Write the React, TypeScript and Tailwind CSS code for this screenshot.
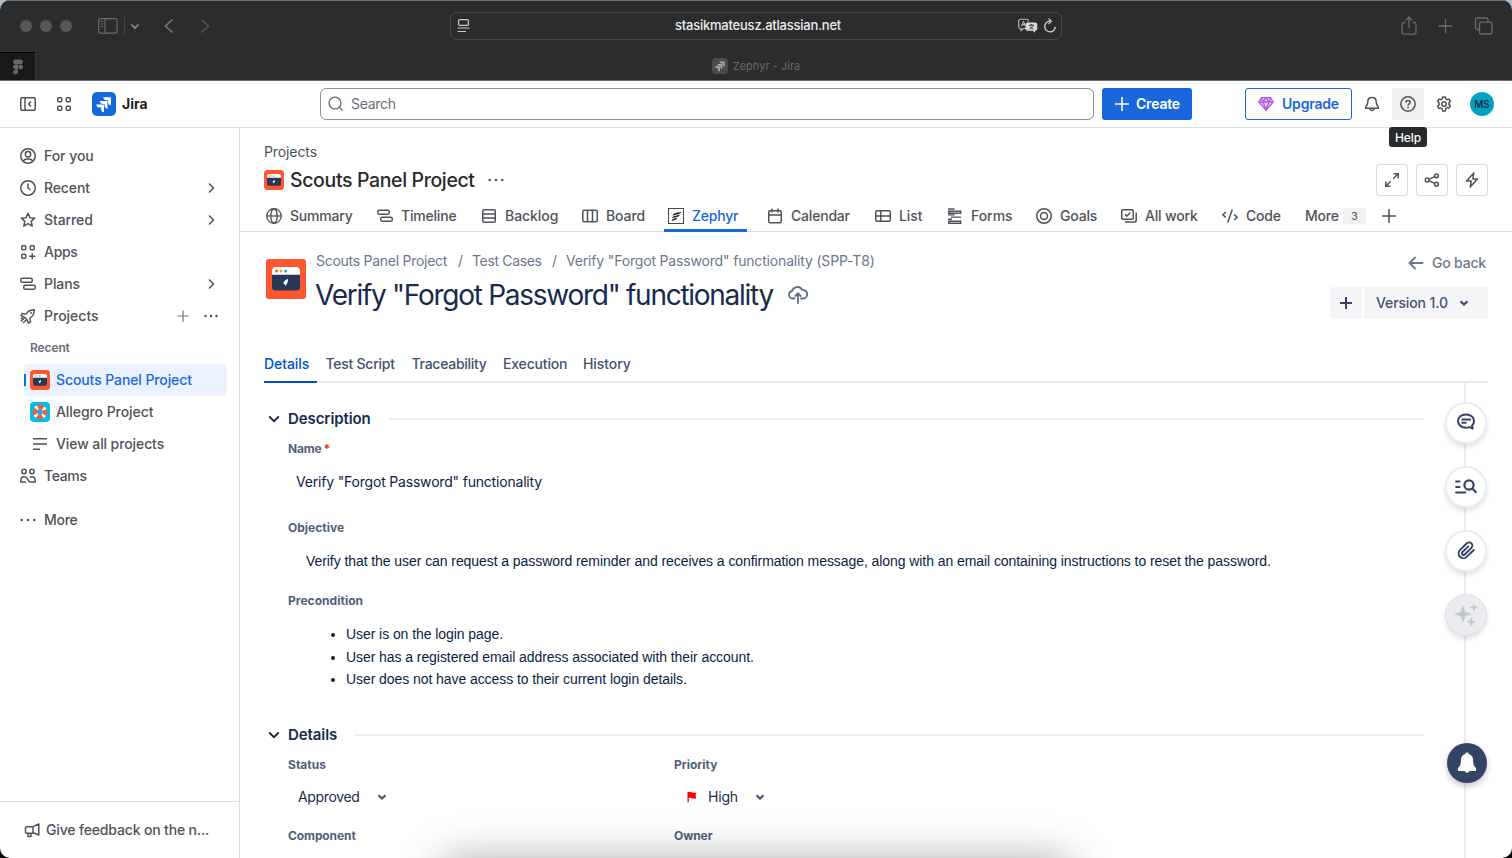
import React from 'react';
import type { ReactNode } from 'react';

const F = "font-['Inter','Liberation_Sans',sans-serif]";

function Icon({ size = 16, sw = 1.5, box = 16, className = '', children }: { size?: number; sw?: number; box?: number; className?: string; children: ReactNode }) {
  return (
    <svg width={size} height={size} viewBox={`0 0 ${box} ${box}`} fill="none" stroke="currentColor" strokeWidth={sw} className={`shrink-0 ${className}`}>
      {children}
    </svg>
  );
}

const Chevron = ({ d = 'right', sw = 1.5, size = 16 }: { d?: 'right' | 'down' | 'left'; sw?: number; size?: number }) => (
  <Icon sw={sw} size={size}>
    <path d={d === 'right' ? 'M6 3.5 10.5 8 6 12.5' : d === 'down' ? 'M4.5 6.5 8 10l3.5-3.5' : 'M10 3.5 5.5 8 10 12.5'} />
  </Icon>
);
const Dots = ({ size = 16 }: { size?: number }) => (
  <Icon size={size}>
    <g fill="currentColor" stroke="none"><circle cx="1.7" cy="8" r="1.35" /><circle cx="8" cy="8" r="1.35" /><circle cx="14.3" cy="8" r="1.35" /></g>
  </Icon>
);
const Timeline = () => <Icon><rect x="0.75" y="2.25" width="11.5" height="4" rx="1.6" /><rect x="3.75" y="9.25" width="11.5" height="4" rx="1.6" /></Icon>;
const Grid = () => (
  <Icon><rect x="1.75" y="1.75" width="4" height="4" rx="1" /><rect x="10.25" y="1.75" width="4" height="4" rx="1" /><rect x="1.75" y="10.25" width="4" height="4" rx="1" /><rect x="10.25" y="10.25" width="4" height="4" rx="1" /></Icon>
);
const JiraMark = () => (
  <path stroke="none" fill="currentColor" d="M9.051 15.434H7.734c-1.988 0-3.413-1.218-3.413-3h7.085c.367 0 .605.26.605.63v7.13c-1.772 0-2.96-1.435-2.96-3.434zm3.5-3.543h-1.318c-1.987 0-3.413-1.196-3.413-2.978h7.085c.367 0 .627.239.627.608v7.13c-1.772 0-2.981-1.435-2.981-3.434zm3.52-3.522h-1.317c-1.987 0-3.413-1.217-3.413-3h7.085c.367 0 .605.262.605.61v7.129c-1.771 0-2.96-1.435-2.96-3.434z" />
);

function Scouts({ size, r = 3 }: { size: number; r?: number }) {
  return (
    <svg width={size} height={size} viewBox="0 0 40 40" className="shrink-0">
      <rect width="40" height="40" rx={r} fill="#ff5630" />
      <rect x="6" y="8" width="28" height="23.5" rx="3.5" fill="#253858" />
      <path d="M6 15.7v-4.2A3.5 3.5 0 0 1 9.5 8h21a3.5 3.5 0 0 1 3.5 3.5v4.2z" fill="#fff" />
      <circle cx="10.6" cy="12" r="1.5" fill="#ff5630" /><circle cx="15" cy="12" r="1.5" fill="#ffab00" /><circle cx="19.5" cy="12" r="1.5" fill="#00b8d9" />
      <path d="M22 20c-2 .4-3.200 1.600-4 3l-1.500.9 1.400.7 1 1 .2 1.500 1.400-1.500c.9-1.500 1.600-3.300 1.500-5.600z" fill="#fff" />
    </svg>
  );
}

function Allegro() {
  return (
    <svg width="20" height="20" viewBox="0 0 20 20" fill="none" className="shrink-0">
      <rect width="20" height="20" rx="4" fill="#00c2e0" />
      <circle cx="10" cy="10" r="5" stroke="#ff5648" strokeWidth="4.3" />
      <circle cx="10" cy="10" r="5" stroke="#fff" strokeWidth="4.3" strokeDasharray="2.1 5.754" strokeDashoffset="-2.877" />
    </svg>
  );
}

function NavRow({ icon, label, track, right }: { icon: ReactNode; label: string; track: string; right?: ReactNode }) {
  return (
    <div className="flex h-8 items-center pl-5 pr-5 text-[#505258]">
      {icon}
      <span className={`ml-2 grow text-sm font-medium ${track}`}>{label}</span>
      {right}
    </div>
  );
}

const Arrow = () => <Chevron />;

function Chrome() {
  return (
    <div className="h-[81px] shrink-0 border-b border-[#6d6e70] border-t border-t-[#6e7274] bg-[#2b2c2e] text-[#6a6b6d]">
      <div className="flex h-[51px] items-center pb-px pl-5 pr-[18px]">
        <div className="flex gap-2">
          <i className="size-3 rounded-full bg-[#57585a]" /><i className="size-3 rounded-full bg-[#57585a]" /><i className="size-3 rounded-full bg-[#57585a]" />
        </div>
        <Icon size={20} box={20} sw={1.2} className="ml-[26px]"><rect x="0.6" y="2.6" width="18.5" height="14.5" rx="2" /><path d="M7 2.6v14.5M2.5 5.5h2.5M2.5 8h2.5M2.5 10.5h2.500" /></Icon>
        <div className="ml-[6px] h-[18px] w-px bg-[#434446]" />
        <div className="ml-[2px] flex text-[#8d8e90]"><Chevron d="down" sw={1.7} /></div>
        <Icon size={20} box={20} sw={1.5} className="ml-[16px] text-[#7b7c7e]"><path d="M13.5 3.5 6.5 10l7 6.500" /></Icon>
        <Icon size={20} box={20} sw={1.5} className="ml-4 text-[#56575a]"><path d="M6.5 3.500l7 6.500-7 6.500" /></Icon>
        <div className="ml-[235px] flex h-7 w-[612px] shrink-0 items-center rounded-[7px] border border-[#48494b] pl-[6px] pr-[3px] text-[#d4d4d5]">
          <Icon sw={1.2} className="text-[#c9cacb]"><rect x="1.6" y="1.6" width="9.8" height="5.8" rx="1" /><path d="M0.500 10h12M0.500 13.500h8.500" /></Icon>
          <span className="grow pl-[25px] text-center text-[13px] font-medium tracking-[-0.22px] text-[#ececed]">stasikmateusz.atlassian.net</span>
          <svg width="20" height="16" viewBox="0 0 20 16" fill="none" className="shrink-0">
            <path d="M8 10.500H5.500L3 12.500V10.500H2.500A1.800 1.800 0 0 1 .7 8.700V3A1.800 1.800 0 0 1 2.500 1.200h6A1.800 1.800 0 0 1 10.300 3v1" stroke="#b9babb" strokeWidth="1.100" />
            <path d="M3.500 8.300 5.500 3.300l2 5M4.200 6.700h2.600" stroke="#d4d4d5" strokeWidth="1" />
            <path d="M9.500 4.500h7.800a2 2 0 0 1 2 2v4.200a2 2 0 0 1-2 2h-.3v2l-2.300-2H9.500a2 2 0 0 1-2-2V6.500a2 2 0 0 1 2-2z" fill="#d9d9da" />
            <path d="M11 7.200h5M13.500 6v1.200M15.200 7.200c-.4 1.800-1.800 3.200-3.800 3.900M11.800 7.200c.5 1.800 1.700 3.100 3.600 3.900" stroke="#2b2c2e" strokeWidth=".9" />
          </svg>
          <Icon sw={1.3} className="ml-1"><path d="M8 3.200a5.300 5.300 0 1 0 5.300 5.600M6.500.6l2.800 2.700-2.800 2.800" /></Icon>
        </div>
        <Icon size={20} box={20} sw={1.3} className="ml-[337px]"><path d="M6.500 6.500H4.800A1.800 1.800 0 0 0 3 8.300v8a1.800 1.800 0 0 0 1.800 1.800h10.400a1.800 1.800 0 0 0 1.800-1.800v-8a1.800 1.800 0 0 0-1.800-1.800h-1.700M10 12V1.500M6.700 4.500 10 1.200l3.300 3.300" /></Icon>
        <Icon size={20} box={20} sw={1.3} className="ml-4"><path d="M10.500 3v14M3.500 10h14" /></Icon>
        <Icon size={20} box={20} sw={1.3} className="ml-[18px]"><rect x="6.500" y="6.200" width="12.500" height="11.800" rx="2" /><path d="M6.300 13.500H4.500A2 2 0 0 1 2.500 11.500V4a2 2 0 0 1 2-2H13a2 2 0 0 1 2 2v2" /></Icon>
      </div>
      <div className="flex h-7">
        <div className="flex w-9 items-center justify-center border-r border-t border-r-[#3a3b3d] border-t-black bg-[#191919] text-[#656667]">
          <svg width="12" height="16" viewBox="0 0 12 16" fill="currentColor"><path d="M3.500.5H6v4.800H3.500a2.400 2.400 0 0 1 0-4.800zM6 .5h2.500a2.400 2.400 0 0 1 0 4.800H6zM3.500 5.600H6v4.800H3.500a2.400 2.400 0 0 1 0-4.800zM3.500 10.700H6v2.400a2.450 2.450 0 1 1-2.500-2.400z" /><circle cx="8.600" cy="8" r="2.400" /></svg>
        </div>
        <div className="flex grow items-center justify-center pr-9">
          <div className="flex size-4 items-center justify-center rounded-[4px] bg-[#4b4c4e] text-[#a5a5a6]"><svg width="16" height="16" viewBox="0 0 24 24"><JiraMark /></svg></div>
          <span className="ml-[5px] pt-px text-[11px] tracking-[0.02px] text-[#68696b]">Zephyr - Jira</span>
        </div>
      </div>
    </div>
  );
}

function TopBar() {
  return (
    <div className="flex h-[47px] shrink-0 items-center border-b border-[#dddee1] pl-5 pr-[18px] text-[#505258]">
      <Icon><rect x="0.75" y="1.75" width="14.5" height="12.5" rx="1.2" /><path d="M5 2v12M11 5.500 8.700 8l2.300 2.500" /></Icon>
      <div className="ml-5 flex"><Grid /></div>
      <div className="ml-5 flex size-6 items-center justify-center rounded-[5px] bg-[#1868db] text-white"><svg width="24" height="24" viewBox="0 0 24 24"><JiraMark /></svg></div>
      <span className="ml-[6px] w-[198px] text-sm font-bold text-[#1e1f21]">Jira</span>
      <div className="flex h-8 w-[774px] items-center rounded-[6px] border border-[#8c8f97] pl-[7px] text-[#6b6e76]">
        <Icon sw={1.4}><circle cx="7" cy="7" r="5.900" /><path d="M11.200 11.200 14.500 14.500" /></Icon>
        <span className="ml-[7px] text-sm tracking-[-0.3px]">Search</span>
      </div>
      <div className="ml-2 flex h-8 w-[90px] items-center rounded-[3px] bg-[#1868db] pl-3 text-white">
        <Icon><path d="M8 1v14M1 8h14" /></Icon>
        <span className="ml-[6px] text-sm font-semibold tracking-[-0.2px]">Create</span>
      </div>
      <div className="ml-[53px] flex h-8 w-[107px] items-center rounded-[3px] border border-[#1868db] pl-3 text-[#1868db]">
        <Icon sw={1.3} className="text-[#af59e1]"><path fill="#e9c9fa" d="M3.500 1.700h9L15.200 6 8 14.300.8 6z" /><path d="M.8 6h14.400M5 6l3 8 3-8M3.500 1.700 5 6l3-4.300L11 6l1.500-4.300" /></Icon>
        <span className="ml-2 text-sm font-semibold tracking-[-0.2px]">Upgrade</span>
      </div>
      <Icon className="ml-3"><path d="M8 1.500c-2.700 0-4.200 1.900-4.200 4.300 0 2.400-.6 3.400-2 4.900v1.500h12.400v-1.500c-1.400-1.500-2-2.500-2-4.900 0-2.400-1.500-4.300-4.200-4.300zM5.700 12.500c.2 1.300 1.100 2 2.300 2s2.100-.7 2.300-2" /></Icon>
      <div className="relative ml-3 flex size-8 items-center justify-center rounded-[3px] bg-[#f0f0f1]">
        <Icon><circle cx="8" cy="8" r="7.200" /><path d="M5.900 6.500c0-1.300.9-2.100 2.200-2.100s2.100.8 2.100 1.900c0 1.500-2.100 1.500-2.100 3.100" /><circle cx="8.050" cy="11.400" r=".9" fill="currentColor" stroke="none" /></Icon>
        <div className="absolute -left-[3px] top-[39px] z-10 flex h-5 w-[38px] items-center justify-center rounded-[3px] bg-[#292a2e] pt-px text-xs font-medium tracking-[-0.1px] text-white">Help</div>
      </div>
      <Icon className="ml-3"><path strokeLinejoin="round" d="M6.700 1h2.600l.5 1.900 1.300.8 1.900-.6 1.300 2.300-1.400 1.400v1.600l1.400 1.400-1.300 2.300-1.900-.5-1.300.8L9.300 15H6.700l-.5-2.100-1.300-.8-1.900.5-1.300-2.300 1.400-1.400V6.800L1.700 5.400 3 3.100l1.900.6 1.300-.8z" /><circle cx="8" cy="8" r="2.200" /></Icon>
      <div className="ml-[18px] flex size-6 items-center justify-center rounded-full bg-[#00a3bf] text-[10px] font-semibold text-[#172b4d]">MS</div>
    </div>
  );
}

function Sidebar() {
  return (
    <aside className="flex w-60 shrink-0 flex-col border-r border-[#dddee1]">
      <nav className="flex grow flex-col pt-3">
        <NavRow label="For you" track="tracking-[-0.05px]" icon={<Icon><circle cx="8" cy="8" r="7.250" /><circle cx="8" cy="6.200" r="2.700" /><path d="M3.300 13.300c.6-1.600 1.900-2.300 3.200-2.300h3c1.300 0 2.600.7 3.200 2.300" /></Icon>} />
        <NavRow label="Recent" track="tracking-[-0.12px]" right={<Arrow />} icon={<Icon><circle cx="8" cy="8" r="7.250" /><path d="M8 3.500V8l2.500 2" /></Icon>} />
        <NavRow label="Starred" track="tracking-[-0.1px]" right={<Arrow />} icon={<Icon><path strokeLinejoin="round" d="m8 1.300 2 4.400 4.700.5-3.500 3.200 1 4.700L8 11.700l-4.200 2.400 1-4.700L1.300 6.200 6 5.700z" /></Icon>} />
        <NavRow label="Apps" track="tracking-[-0.3px]" icon={<Icon><rect x="1.750" y="1.750" width="4" height="4" rx="1" /><rect x="10.250" y="1.750" width="4" height="4" rx="1" /><rect x="1.750" y="10.250" width="4" height="4" rx="1" /><path d="M12.250 9.200v6.100M9.200 12.250h6.100" /></Icon>} />
        <NavRow label="Plans" track="tracking-[-0.07px]" right={<Arrow />} icon={<Timeline />} />
        <NavRow
          label="Projects"
          track="tracking-normal"
          icon={<Icon sw={1.4}><path strokeLinejoin="round" d="M14.300 1.700c-3.300 0-5.600.9-7.300 3L5.800 6.100l-3.800-.6-1 2.200 3.300 1.300 2.700 2.700 1.300 3.300 2.200-1-.6-3.800 1.400-1.200c2.100-1.700 3-4 3-7.300zM4.200 10.300.9 13.600M6.200 11.900l-3.100 3.200M2.700 9.300 1 11" /><circle cx="11" cy="5" r=".9" fill="currentColor" stroke="none" /></Icon>}
          right={<><Icon size={12} sw={1.600} className="mr-[15px] text-[#707278]"><path d="M8 .5v15M.5 8h15" /></Icon><span className="mr-px flex"><Dots size={14} /></span></>}
        />
        <div className="flex h-8 items-center pl-[30px] text-xs font-semibold tracking-[-0.12px] text-[#6b6e76]">Recent</div>
        <div className="ml-6 mr-3 flex h-8 items-center rounded-[4px] bg-[#e9f2fe] text-[#1868db]">
          <i className="mr-1 h-3 w-[2px] bg-[#1868db]" />
          <Scouts size={20} r={7} />
          <span className="ml-[6px] text-sm font-medium tracking-[-0.1px]">Scouts Panel Project</span>
        </div>
        <div className="flex h-8 items-center pl-[30px] text-[#505258]"><Allegro /><span className="ml-[6px] text-sm font-medium tracking-[-0.07px]">Allegro Project</span></div>
        <div className="flex h-8 items-center pl-8 text-[#505258]"><Icon><path d="M1 2.700h14M1 8h14M1 13.300h7" /></Icon><span className="ml-2 text-sm font-medium tracking-[-0.1px]">View all projects</span></div>
        <NavRow label="Teams" track="tracking-[-0.35px]" icon={<Icon><circle cx="4" cy="3.500" r="2.200" /><circle cx="12" cy="3.500" r="2.200" /><path d="M6 14H.8v-1.500c0-2.500 1.200-3.700 3.200-3.700 1.700 0 2.800.8 3.600 2.400.8 1.800 1.700 2.800 3.400 2.800h4.200v-1.500c0-2.500-1.200-3.700-3.200-3.700-.8 0-1.500.2-2 .6" /></Icon>} />
        <div className="h-3" />
        <NavRow label="More" track="tracking-[-0.29px]" icon={<Dots />} />
      </nav>
      <div className="flex h-[57px] items-center border-t border-[#dddee1] pl-6 text-[#505258]">
        <Icon><path strokeLinejoin="round" d="M14.800 1.800v11.200l-3.800-1.700H2.800A1.300 1.300 0 0 1 1.500 10V6A1.300 1.300 0 0 1 2.800 4.700H9l5.800-2.900zM9 4.700v6.600M4 11.300v3.200h3V11.300" /></Icon>
        <span className="ml-[6px] text-sm font-medium tracking-[-0.16px]">Give feedback on the n...</span>
      </div>
    </aside>
  );
}

function Tab({ w, icon, label, track = '', active }: { w: string; icon: ReactNode; label: string; track?: string; active?: boolean }) {
  return (
    <div className={`relative flex h-8 shrink-0 items-center ${w} ${active ? 'text-[#1868db]' : 'text-[#505258]'}`}>
      {icon}
      <span className={`ml-2 whitespace-nowrap text-sm font-medium ${track}`}>{label}</span>
      {active && <i className="absolute -left-1 bottom-0 h-[3px] w-[83px] bg-[#1868db]" />}
    </div>
  );
}

function ProjectHeader() {
  const btn = 'flex size-8 items-center justify-center rounded-[3px] border border-[#dddee1]';
  return (
    <header className="h-[104px] shrink-0 border-b border-[#dddee1] pl-6 text-[#505258]">
      <div className="flex h-[72px] justify-between pr-6">
        <div>
          <div className="mt-[14px] text-sm leading-5 tracking-[-0.1px]">Projects</div>
          <div className="mt-1 flex h-7 items-center">
            <Scouts size={20} r={7} />
            <span className="ml-[6px] mr-[13px] pt-px text-[19.5px] font-medium tracking-[-0.37px] text-[#292a2e]">Scouts Panel Project</span>
            <Dots />
          </div>
        </div>
        <div className="mt-9 flex gap-2">
          <div className={btn}><Icon><path d="M9.500 1.800h4.700v4.700M14.200 1.800 9.300 6.700M1.800 9.500v4.700h4.700M1.800 14.200l4.900-4.900" /></Icon></div>
          <div className={btn}><Icon><circle cx="3.200" cy="8" r="1.900" /><circle cx="12.500" cy="3.800" r="1.900" /><circle cx="12.500" cy="12.200" r="1.900" /><path d="m5 7.200 5.700-2.600M5 8.800l5.700 2.600" /></Icon></div>
          <div className={btn}><Icon><path strokeLinejoin="round" d="M9.800 1 2.500 9h4.700l-1 6 7.300-8H8.800z" /></Icon></div>
        </div>
      </div>
      <div className="flex h-8 pl-[2px]">
        <Tab w="w-[111px]" label="Summary" track="tracking-[-0.2px]" icon={<Icon sw={1.300}><circle cx="8" cy="8" r="7.250" /><ellipse cx="8" cy="8" rx="3.200" ry="7.250" /><path d="M.8 8h14.400" /></Icon>} />
        <Tab w="w-[104px]" label="Timeline" track="tracking-[-0.2px]" icon={<Timeline />} />
        <Tab w="w-[101px]" label="Backlog" track="tracking-[-0.05px]" icon={<Icon><rect x="1.750" y="1.750" width="12.500" height="12.500" rx="1.200" /><path d="M2 6h12M2 10h12" /></Icon>} />
        <Tab w="w-[86px]" label="Board" track="tracking-[-0.1px]" icon={<Icon><rect x=".75" y="2.250" width="14.500" height="11.500" rx="1.200" /><path d="M5.500 2v12M10.500 2v12" /></Icon>} />
        <Tab w="w-[99px]" label="Zephyr" track="tracking-[-0.2px]" active icon={<Icon sw={1} className="text-[#44464b]"><rect x=".5" y=".5" width="15" height="15" /><path stroke="none" fill="#1e1f21" d="M4.600 7.600c.6-2.600 3.600-2.600 8.600-3.900-.5 2.700-4.500 2.500-8.600 3.900zM4 10.300c.6-2.400 3.400-2.500 7.800-3.500-.5 2.400-4.200 2.300-7.800 3.500zM3.500 12.900c.5-2.100 2.400-2.500 5.900-3.200-.5 2.200-3.100 2.300-5.900 3.200z" /></Icon>} />
        <Tab w="w-[108px]" label="Calendar" track="tracking-[-0.2px]" icon={<Icon><rect x="1.750" y="2.750" width="12.500" height="12" rx="1.200" /><path d="M2 7h12M5 .5v4M11 .5v4" /></Icon>} />
        <Tab w="w-[72px]" label="List" track="tracking-[-0.1px]" icon={<Icon><rect x=".75" y="2.750" width="14.500" height="10.500" rx="1.200" /><path d="M1 8h14M5.700 3v10" /></Icon>} />
        <Tab w="w-[89px]" label="Forms" track="tracking-[-0.05px]" icon={<Icon sw={1.400}><path d="M1 1h6.500M1 6.900h6.500M1 11.300h4" /><path d="M1.700 3.200h12v2h-12zM1.700 13.200h12v2h-12zM4 9.100h9.700v-.1" /></Icon>} />
        <Tab w="w-[85px]" label="Goals" track="tracking-[-0.2px]" icon={<Icon><circle cx="8" cy="8" r="7.250" /><circle cx="8" cy="8" r="3.500" /></Icon>} />
        <Tab w="w-[101px]" label="All work" track="tracking-[-0.18px]" icon={<Icon><rect x=".75" y="1.750" width="11.500" height="9.500" rx="1" /><path d="M15.200 4.500v7.800a1.800 1.800 0 0 1-1.800 1.800H4M4 6.300l1.900 1.900L9.200 4.600" /></Icon>} />
        <Tab w="w-[83px]" label="Code" track="tracking-[-0.25px]" icon={<Icon><path d="M3.800 4 .9 6.700l2.900 2.700M12.200 6.600l2.900 2.700-2.900 2.700M10.300 1.500 5.700 14.500" /></Icon>} />
        <div className="flex h-8 items-center">
          <span className="w-[38px] text-sm font-medium tracking-[-0.2px]">More</span>
          <span className="flex h-4 w-[23px] items-center justify-center rounded-[2px] bg-[#f0f1f2] text-[11px]">3</span>
          <Icon className="ml-[15px]"><path d="M8 1v14M1 8h14" /></Icon>
        </div>
      </div>
    </header>
  );
}

function Section({ title }: { title: string }) {
  return (
    <div className="flex h-6 items-center pr-16 text-[#172b4d]">
      <div className="-ml-[2px] mr-[2px] flex size-6 items-center justify-center"><Icon sw={1.900}><path strokeLinecap="round" d="M3.700 6 8 10.200 12.300 6" /></Icon></div>
      <h3 className="text-[15px] font-semibold tracking-[-0.08px]">{title}</h3>
      <i className="ml-[18px] h-[2px] grow bg-[#ebecf0]" />
    </div>
  );
}

const Label = ({ children, track = '' }: { children: ReactNode; track?: string }) => (
  <div className={`h-4 text-xs font-bold leading-4 text-[#505f79] ${track}`}>{children}</div>
);

const Caret = () => <Icon sw={2}><path d="M4.500 6.300 8 9.600l3.500-3.300" /></Icon>;

const conditions = ['User is on the login page.', 'User has a registered email address associated with their account.', 'User does not have access to their current login details.'];

function TestCase() {
  const round = 'relative flex size-[42px] items-center justify-center rounded-full border-2 border-[#ebecf0] bg-white shadow-[0_3px_5px_rgba(9,30,66,0.13)]';
  return (
    <main className="grow pl-6 pr-6">
      <div className="flex h-[134px] justify-between pt-[19px]">
        <div className="flex pl-[2px]">
          <div className="pt-2"><Scouts size={40} /></div>
          <div className="ml-[10px]">
            <div className="flex text-sm leading-5 text-[#6b778c]">
              <span className="w-[142px] tracking-[-0.27px]">Scouts Panel Project</span>
              <span className="w-[14px]">/</span>
              <span className="w-20 tracking-[-0.35px]">Test Cases</span>
              <span className="w-[14px]">/</span>
              <span className="tracking-[-0.17px]">Verify "Forgot Password" functionality (SPP-T8)</span>
            </div>
            <div className="flex items-center pt-[6px] text-[#172b4d]">
              <h1 className="-ml-px text-[28px] font-normal leading-9 tracking-[-1.27px]">Verify "Forgot Password" functionality</h1>
              <Icon size={22} box={22} sw={1.800} className="ml-[14px] text-[#5e6c84]"><path strokeLinecap="round" d="M7.500 14.500H5.600a3.800 3.800 0 0 1-.6-7.500 5.600 5.600 0 0 1 10.200-1.200c2.900-.2 5 1.900 5 4.400 0 2.400-1.900 4.300-4.300 4.300H14M11 19v-8.800M8.300 12 11 9.300l2.700 2.700" /></Icon>
            </div>
          </div>
        </div>
        <div className="flex flex-col items-end">
          <div className="flex h-6 items-center pr-[2px] text-[#6b778c]">
            <Icon sw={1.900}><path strokeLinecap="round" d="M14.500 8H2M7 2.500 1.500 8 7 13.500" /></Icon>
            <span className="ml-2 text-sm font-medium tracking-[-0.18px]">Go back</span>
          </div>
          <div className="mt-3 flex gap-[2px] text-[#344563]">
            <div className="flex size-8 items-center justify-center rounded-l-[3px] bg-[#f5f5f8]"><Icon sw={2}><path d="M8 2v12M2 8h12" /></Icon></div>
            <div className="flex h-8 w-[124px] items-center rounded-r-[3px] bg-[#f5f5f8] pl-3">
              <span className="mr-2 text-sm font-medium tracking-[-0.12px] text-[#42526e]">Version 1.0</span>
              <Caret />
            </div>
          </div>
        </div>
      </div>
      <div className="flex h-[17px] border-b-2 border-[#ebecf0] text-sm font-medium text-[#42526e]">
        <div className="relative -mt-3 h-[29px] w-[61.500px] leading-5 tracking-[-0.08px] text-[#0052cc]">Details<i className="absolute bottom-0 left-0 h-[2px] w-[53px] bg-[#0052cc]" /></div>
        <div className="-mt-3 w-[86px] leading-5 tracking-[-0.25px]">Test Script</div>
        <div className="-mt-3 w-[91.500px] leading-5 tracking-[-0.27px]">Traceability</div>
        <div className="-mt-3 w-20 leading-5 tracking-[-0.17px]">Execution</div>
        <div className="-mt-3 leading-5 tracking-[-0.08px]">History</div>
      </div>
      <div className="relative h-[475px]">
        <div className="pt-6">
          <Section title="Description" />
          <div className="pl-6">
            <div className="flex pt-[10px]"><Label track="tracking-[-0.2px]">Name</Label><span className="ml-[2px] text-xs font-bold leading-4 text-[#de350b]">*</span></div>
            <div className="mt-[15px] pl-2 text-sm leading-5 tracking-[-0.19px] text-[#091e42]">Verify "Forgot Password" functionality</div>
            <div className="pt-7"><Label track="tracking-normal">Objective</Label></div>
            <div className="mt-[15px] whitespace-nowrap pl-[18px] font-['Liberation_Sans',Arial,sans-serif] text-sm leading-5 tracking-[-0.071px] text-[#091e42]">Verify that the user can request a password reminder and receives a confirmation message, along with an email containing instructions to reset the password.</div>
            <div className="pt-[22px]"><Label track="tracking-[0.03px]">Precondition</Label></div>
            <ul className="mt-[14px] list-disc pl-[58px] font-['Liberation_Sans',Arial,sans-serif] text-sm leading-[22.5px] tracking-[-0.07px] text-[#091e42]">
              {conditions.map((c) => <li key={c}>{c}</li>)}
            </ul>
          </div>
        </div>
        <div className="pt-[32.500px]">
          <Section title="Details" />
          <div className="grid grid-cols-[386px_1fr] pl-6 pt-[10px] text-[#172b4d]">
            <Label track="tracking-[0.03px]">Status</Label>
            <Label track="tracking-normal">Priority</Label>
            <div className="mt-[14px] flex h-5 items-center pl-[10px] text-sm"><span className="w-[76px] tracking-[-0.35px]">Approved</span><span className="text-[#42526e]"><Caret /></span></div>
            <div className="mt-[14px] flex h-5 items-center pl-[13px] text-sm">
              <svg width="10" height="12" viewBox="0 0 10 12" className="mr-[11px] shrink-0"><path d="M.5 1h4l1 .8H9.500L8.500 4.600l.8 3H5.300L4.500 6.800H1.800V11.300H.5z" fill="#ff0000" /></svg>
              <span className="w-[44px] tracking-[-0.2px]">High</span><span className="text-[#42526e]"><Caret /></span>
            </div>
            <div className="pt-[21px]"><Label track="tracking-[-0.1px]">Component</Label></div>
            <div className="pt-[21px]"><Label track="tracking-[-0.1px]">Owner</Label></div>
          </div>
        </div>
        <div className="absolute right-0 top-0 flex h-full w-[44px] flex-col items-center text-[#344563]">
          <i className="absolute left-5 top-0 h-full w-[2px] bg-[#ebecf0]" />
          <div className="flex flex-col gap-[22px] pt-[19px]">
            <div className={round}><Icon size={20} box={20} sw={2} className="-mt-[2px]"><path strokeLinejoin="round" d="M10 2.500c4.500 0 8 2.700 8 6.600 0 1.900-.7 3.500-2 4.700l.8 2.700-3.300-1.400c-1 .4-2.200.6-3.500.6-4.500 0-8-2.700-8-6.600s3.500-6.600 8-6.600z" /><path d="M5.500 7.500h9.500M5.500 10.800h5" /></Icon></div>
            <div className={round}><Icon size={22} box={22} sw={2.200}><circle cx="14" cy="9" r="4.600" /><path strokeLinecap="round" d="m17.600 12.800 3.200 3.200M1.200 5.500h3.300M1.200 11h3.300M1.200 16.500h9" /></Icon></div>
            <div className={round}><Icon size={22} box={24} sw={2.100} className="-mt-[2px]"><path strokeLinecap="round" strokeLinejoin="round" d="m20.500 12-7.800 7.500a5.200 5.200 0 0 1-7.300-7.400l7.500-7.400a3.500 3.500 0 0 1 5 5l-7.300 7.200a1.800 1.800 0 0 1-2.600-2.500l6.500-6.300" /></Icon></div>
            <div className="relative flex size-[42px] items-center justify-center rounded-full border border-[#dfe1e6] bg-[#ebecf0] shadow-[0_3px_5px_rgba(9,30,66,0.13)]">
              <svg width="24" height="24" viewBox="0 0 24 24" fill="#c1c7d0"><path d="M9 2l2.300 6.700 6.700 2.300-6.700 2.300L9 20l-2.300-6.700L0 11l6.700-2.300zM19.800.3l1.200 3 3 1.200-3 1.200-1.200 3-1.200-3-3-1.200 3-1.200zM17.200 14l1.400 3.400L22 18.800l-3.400 1.400-1.400 3.500-1.400-3.500-3.500-1.400 3.500-1.400z" /></svg>
            </div>
          </div>
          <div className="relative left-px mt-[107px] flex size-10 shrink-0 items-center justify-center rounded-full bg-[#344563] shadow-[0_3px_6px_rgba(9,30,66,0.25)]">
            <svg width="20" height="22" viewBox="0 0 20 22" fill="#fff"><path d="M10 .5c1 0 1.700.7 1.700 1.600 2.900.7 4.400 3 4.400 6 0 4.700 1 6.600 3 8v1.800c0 .7-.5 1.100-1.200 1.100h-5.500a2.500 2.500 0 0 1-4.800 0H2.100c-.7 0-1.200-.4-1.200-1.100v-1.800c2-1.400 3-3.300 3-8 0-3 1.500-5.300 4.400-6C8.300 1.200 9 .5 10 .5z" /></svg>
          </div>
        </div>
      </div>
    </main>
  );
}

export default function App() {
  return (
    <div className={`h-[858px] w-[1512px] overflow-hidden bg-linear-to-b from-[#a9bcc8] from-50% to-black to-50% ${F}`}>
      <div className="relative flex h-full flex-col overflow-hidden rounded-[10px] bg-white">
        <Chrome />
        <TopBar />
        <div className="flex min-h-0 grow">
          <Sidebar />
          <div className="flex min-w-0 grow flex-col">
            <ProjectHeader />
            <TestCase />
          </div>
        </div>
        <div className="absolute left-[441px] top-[861px] h-10 w-[630px] rounded-[10px] shadow-[0_0_44px_rgba(0,0,0,0.36)]" />
      </div>
    </div>
  );
}
